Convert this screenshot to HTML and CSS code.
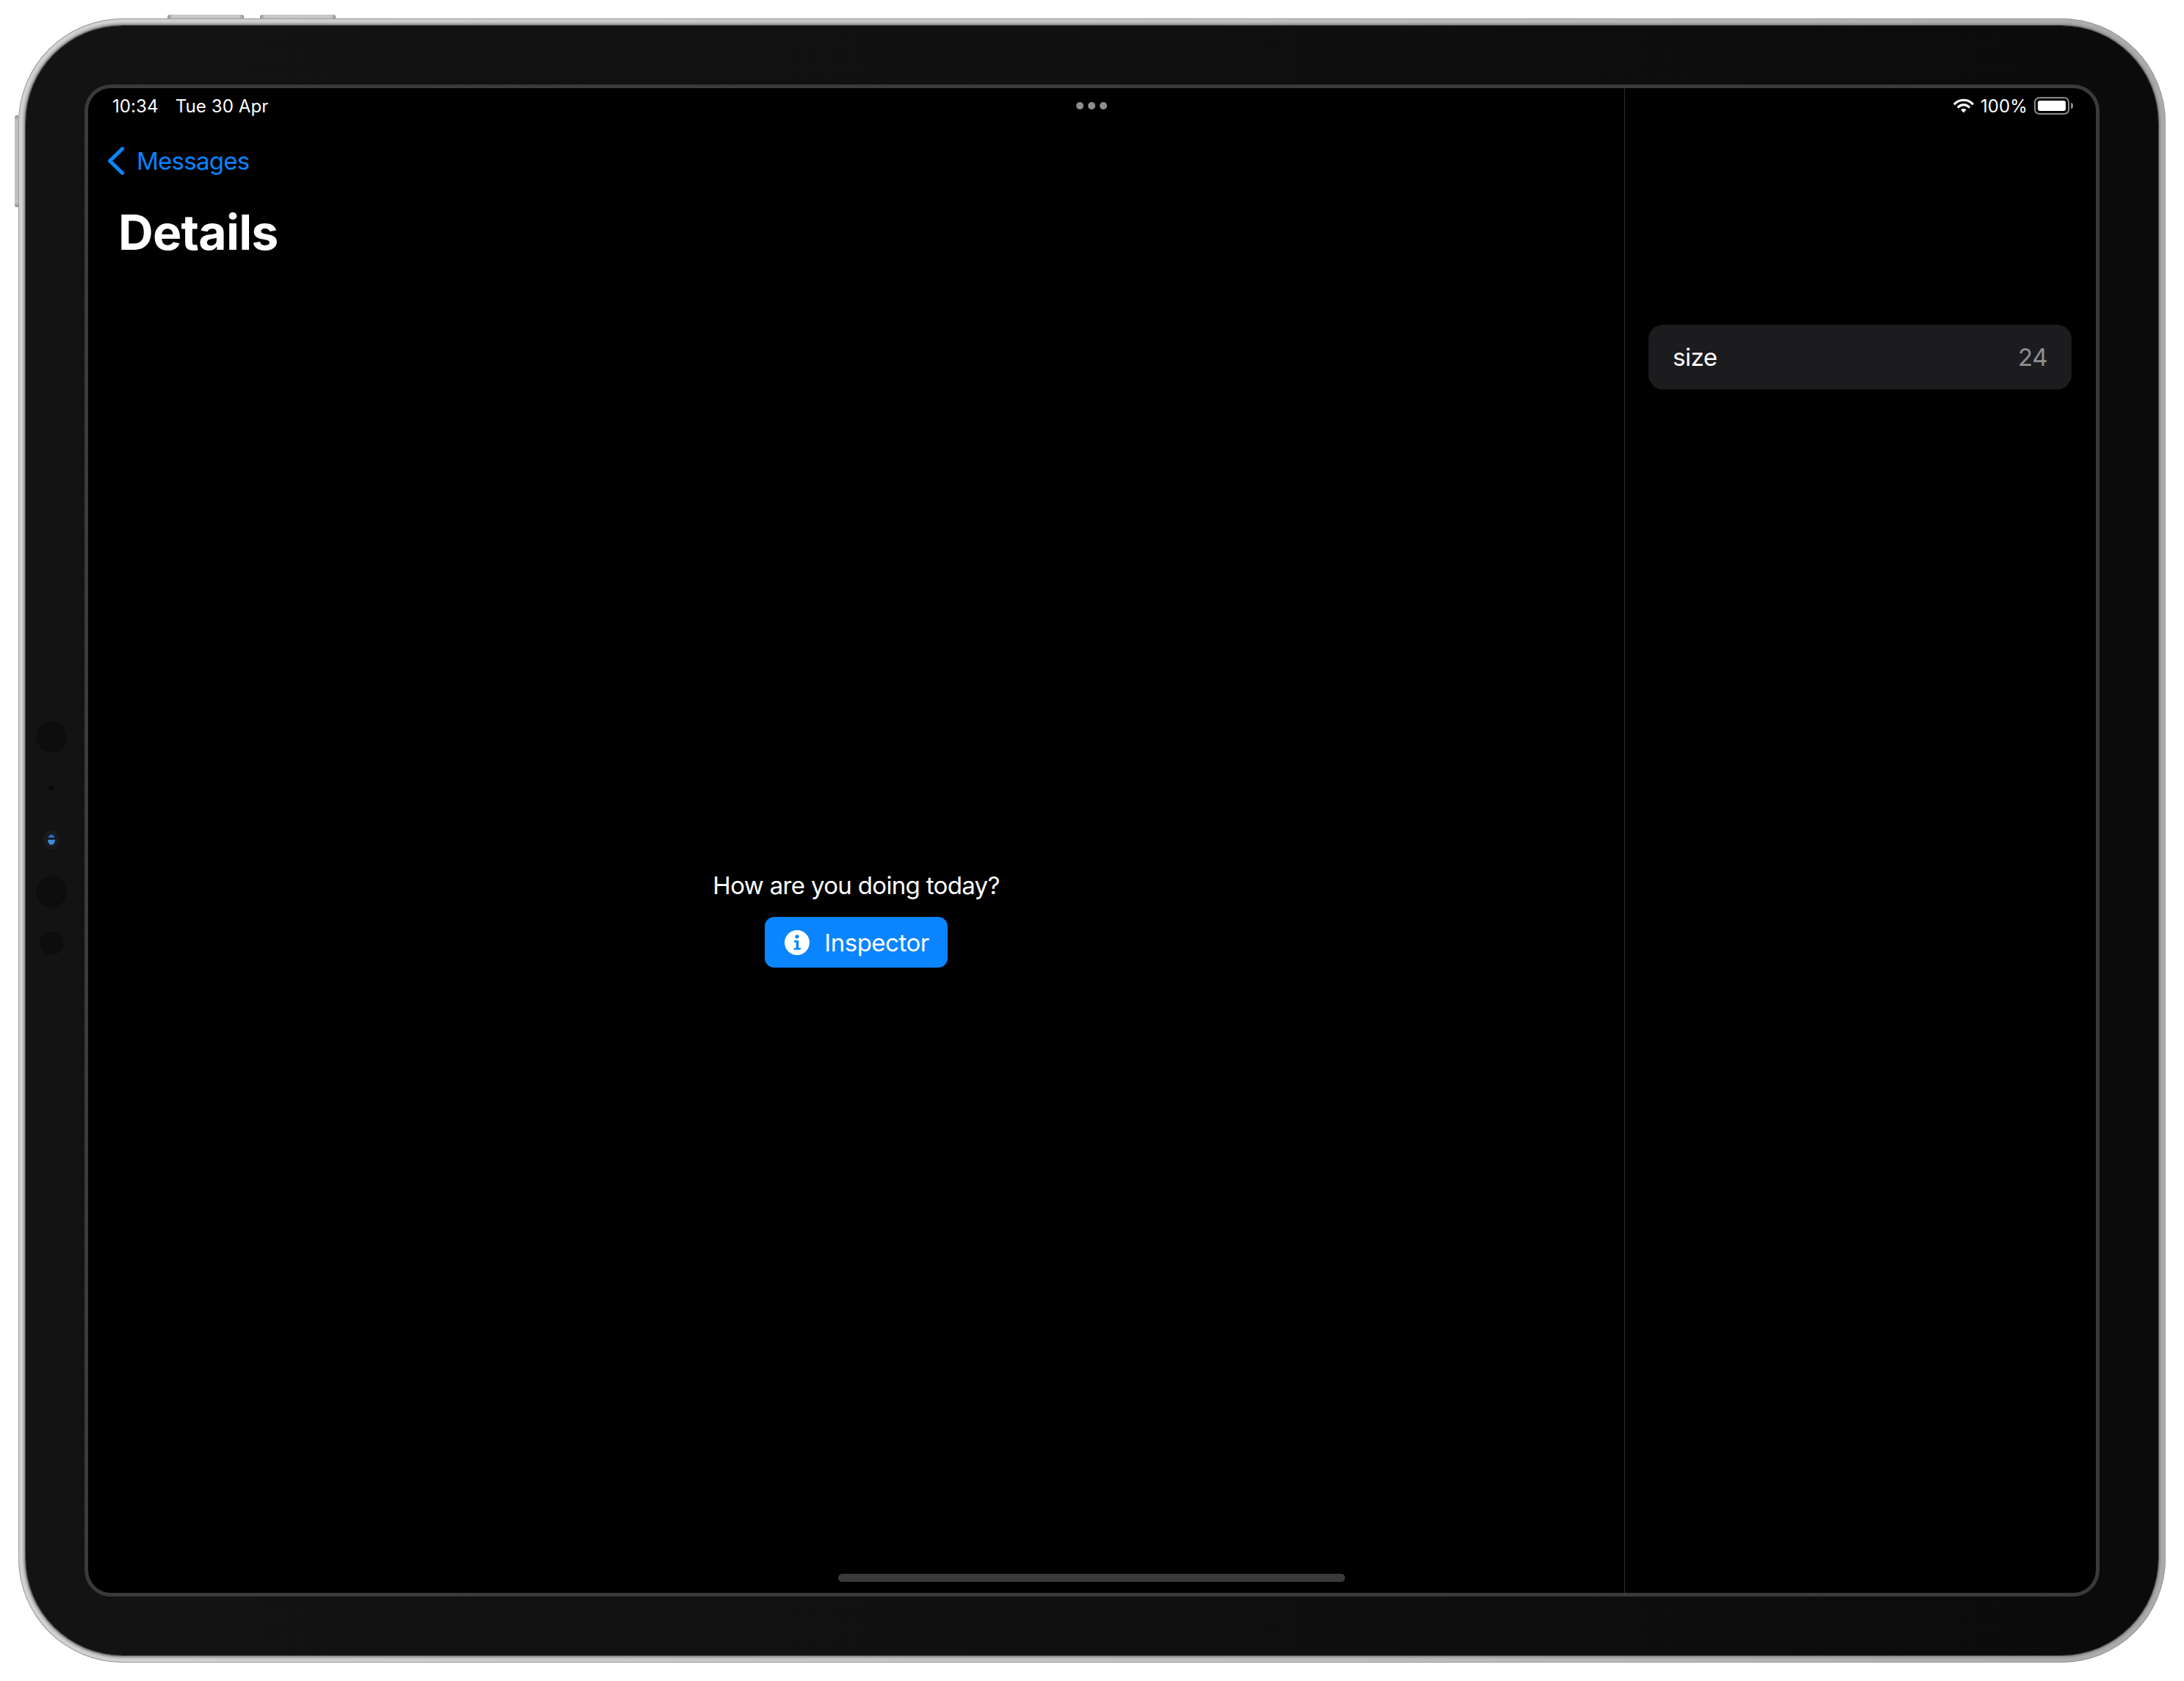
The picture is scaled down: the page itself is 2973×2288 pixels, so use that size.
FILE: index.html
```html
<!DOCTYPE html>
<html lang="en">
<head>
    <meta charset="UTF-8">
    <title>Details</title>
    <link rel="stylesheet" href="styles.css">
</head>
<body>
    <div class="device">
        <span class="hw-btn hw-top-a"></span>
        <span class="hw-btn hw-top-b"></span>
        <span class="hw-btn hw-side"></span>

        <div class="bezel">
            <div class="sensors">
                <span class="sensor sensor-lg"></span>
                <span class="sensor-dot"></span>
                <span class="lens"></span>
                <span class="sensor sensor-lg"></span>
                <span class="sensor sensor-sm"></span>
            </div>

            <div class="screen">
                <div class="status-bar">
                    <div class="status-left">
                        <span>10:34</span>
                        <span>Tue 30 Apr</span>
                    </div>
                    <div class="status-right">
                        <svg class="wifi" width="28" height="20" viewBox="0 0 28 20">
                            <path d="M2 7.2a17 17 0 0 1 24 0" fill="none" stroke="#fff" stroke-width="3.2" stroke-linecap="round"/>
                            <path d="M6.8 11.6a10.2 10.2 0 0 1 14.4 0" fill="none" stroke="#fff" stroke-width="3.2" stroke-linecap="round"/>
                            <path d="M10.2 15.2a5.4 5.4 0 0 1 7.6 0L14 19.6z" fill="#fff"/>
                        </svg>
                        <span>100%</span>
                        <div class="battery"><div class="battery-fill"></div></div>
                        <span class="battery-nub"></span>
                    </div>
                </div>
                <div class="multitask-dots"><span></span><span></span><span></span></div>

                <div class="main">
                    <div class="nav-back">
                        <svg width="23" height="38" viewBox="0 0 23 38">
                            <path d="M20.5 2.5L3.5 19L20.5 35.5" fill="none" stroke="#0a84ff" stroke-width="5" stroke-linecap="round" stroke-linejoin="round"/>
                        </svg>
                        <span>Messages</span>
                    </div>
                    <h1 class="page-title">Details</h1>
                    <div class="center">
                        <p class="question">How are you doing today?</p>
                        <div class="btn-inspector">
                            <svg width="34" height="34" viewBox="0 0 34 34">
                                <circle cx="17" cy="17" r="17" fill="#fff"/>
                                <circle cx="17" cy="8.8" r="2.6" fill="#0a84ff"/>
                                <path d="M12.8 14h6.4v10.2h2.8v2.6h-9.2v-2.6h2.9v-7.6h-2.9z" fill="#0a84ff"/>
                            </svg>
                            <span>Inspector</span>
                        </div>
                    </div>
                </div>

                <div class="inspector">
                    <div class="row">
                        <span>size</span>
                        <span class="row-value">24</span>
                    </div>
                </div>

                <div class="home-bar"></div>
            </div>
        </div>
    </div>
</body>
</html>
```

FILE: styles.css
```css
html, body {
    margin: 0;
    background: #fff;
}

body {
    padding: 25px 0 0 25px;
    font-family: Inter, "Liberation Sans", sans-serif;
    color: #fff;
}

.device {
    position: relative;
    width: 2923px;
    height: 2238px;
    box-sizing: border-box;
    padding: 10px;
    border-radius: 142px;
    background: linear-gradient(90deg, #d2d2d2, #c4c4c4 50%, #ababab);
    box-shadow: inset 0 0 0 1px #9b9b9b;
}

.hw-btn {
    position: absolute;
    background: linear-gradient(90deg, #8c8c8c, #c8c8c8 6%, #c8c8c8 94%, #8c8c8c);
}

.hw-top-a, .hw-top-b {
    top: -5px;
    height: 5px;
    border-radius: 3px 3px 0 0;
}

.hw-top-a {
    left: 203px;
    width: 104px;
}

.hw-top-b {
    left: 329px;
    width: 103px;
}

.hw-side {
    left: -5px;
    top: 132px;
    width: 5px;
    height: 125px;
    border-radius: 3px 0 0 3px;
    background: linear-gradient(#8c8c8c, #c0c0c0 5%, #c0c0c0 95%, #8c8c8c);
}

.bezel {
    position: relative;
    height: 100%;
    box-sizing: border-box;
    padding: 80px;
    border-radius: 132px;
    background: linear-gradient(90deg, #131313, #101010 50%, #0b0b0b);
    box-shadow: 0 0 0 1px #4c4c4c, 0 0 3px 3px #8c8c8c;
}

.sensors {
    position: absolute;
    left: 24px;
    top: 947px;
    width: 21px;
    display: flex;
    flex-direction: column;
    align-items: center;
}

.sensor {
    flex: none;
    border-radius: 50%;
    background: #0d0d0d;
}

.sensor-lg {
    width: 42px;
    height: 42px;
}

.sensor-sm {
    width: 32px;
    height: 32px;
    margin-top: 33px;
}

.sensor-dot {
    flex: none;
    width: 6px;
    height: 6px;
    margin-top: 46px;
    border-radius: 50%;
    background: #080808;
}

.lens {
    flex: none;
    width: 10px;
    height: 14px;
    margin: 60px 0 43px;
    border-radius: 50%;
    background: linear-gradient(#2a6fc0 0 30%, #12202f 30% 50%, #3f8ad8 50%);
    box-shadow: 0 0 0 6px #1a1b1e;
}

.screen {
    position: relative;
    display: flex;
    height: 100%;
    box-sizing: border-box;
    border: 5px solid #3a3a3a;
    border-radius: 36px;
    background: #000;
    overflow: hidden;
}

.status-bar {
    position: absolute;
    left: 33px;
    right: 31px;
    top: 8px;
    height: 32px;
    display: flex;
    justify-content: space-between;
    align-items: center;
    font-size: 24px;
    letter-spacing: 0.1px;
}

.status-left {
    display: flex;
    gap: 23px;
}

.status-right {
    display: flex;
    align-items: center;
}

.wifi {
    margin-right: 9px;
}

.battery {
    width: 48px;
    height: 24px;
    box-sizing: border-box;
    margin-left: 9px;
    padding: 3px;
    border: 2px solid #8a8a8a;
    border-radius: 7px;
}

.battery-fill {
    height: 100%;
    border-radius: 3px;
    background: #fff;
}

.battery-nub {
    width: 3px;
    height: 8px;
    margin-left: 2px;
    border-radius: 0 3px 3px 0;
    background: #8a8a8a;
}

.multitask-dots {
    position: absolute;
    top: 19px;
    left: 1345px;
    display: flex;
    gap: 6px;
}

.multitask-dots span {
    width: 10px;
    height: 10px;
    border-radius: 50%;
    background: #8e8e8e;
}

.main {
    flex: none;
    width: 2091px;
    display: flex;
    flex-direction: column;
}

.nav-back {
    display: flex;
    align-items: center;
    gap: 17px;
    padding: 78px 0 0 26px;
    font-size: 33px;
    line-height: 42px;
    letter-spacing: -0.75px;
    color: #0a84ff;
}

.page-title {
    margin: 35px 0 0 41px;
    font-size: 66px;
    line-height: 82px;
    font-weight: 700;
    letter-spacing: -0.7px;
}

.center {
    flex: 1;
    display: flex;
    flex-direction: column;
    align-items: center;
    justify-content: center;
    padding-bottom: 24px;
}

.question {
    margin: 0 0 22px;
    font-size: 33px;
    line-height: 42px;
    letter-spacing: -0.67px;
}

.btn-inspector {
    display: flex;
    align-items: center;
    gap: 20px;
    height: 69px;
    padding: 0 25px 0 27px;
    border-radius: 13px;
    background: #0a84ff;
    font-size: 33px;
    letter-spacing: -0.5px;
}

.inspector {
    flex: 1;
    padding: 322px 33px 0 32px;
    border-left: 1px solid #2c2c2c;
}

.row {
    display: flex;
    justify-content: space-between;
    align-items: center;
    height: 88px;
    padding: 0 33px;
    border-radius: 20px;
    background: #1c1c1e;
    font-size: 33px;
    letter-spacing: -0.5px;
}

.row-value {
    color: #8e8e93;
}

.home-bar {
    position: absolute;
    left: 1021px;
    bottom: 15px;
    width: 690px;
    height: 11px;
    border-radius: 6px;
    background: #3a3a3a;
}
```
